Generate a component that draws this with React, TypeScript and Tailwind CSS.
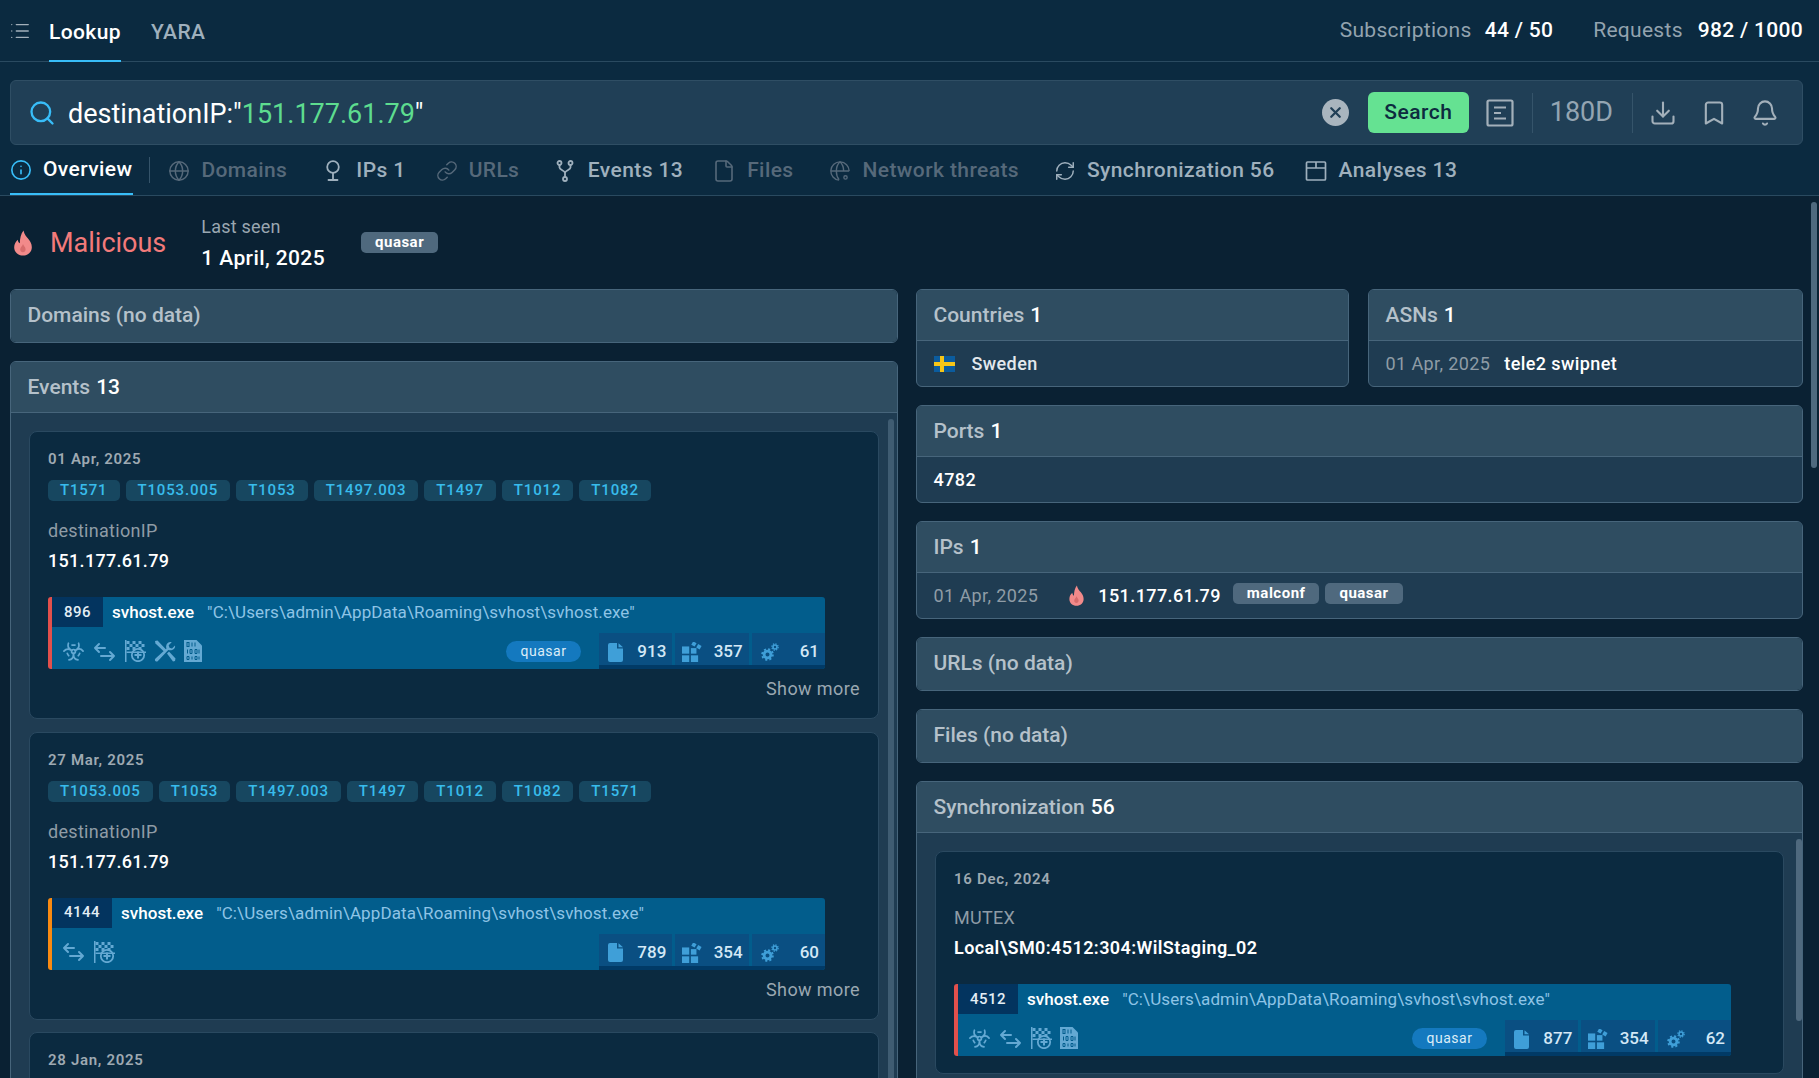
import React from 'react';
import {
  Bell, Biohazard, Bookmark, Download, Globe, Link, List,
  RefreshCw, Search, File, Info, X
} from 'lucide-react';

const Flame = ({ className }: { className?: string }) => (
  <svg viewBox="0 0 20 28" className={className} fill="#f28a8a">
    <path d="M10.5 0.5c1 4.5 3.2 6.5 5.3 9.3 2 2.6 3.7 5.4 3.7 8.7 0 5.4-4.3 9-9.5 9S0.5 23.900 0.5 18.500c0-3.600 1.800-6.300 3.900-8.100 0.200 1.900 0.900 3.200 2.200 4 0.100-5.200 1-10.300 3.900-13.900z" />
    <path d="M10 15c0.500 2 2.800 3 2.800 5.800 0 1.900-1.300 3.200-2.900 3.200s-2.900-1.300-2.900-3c0-2.800 2.300-3.500 3-6z" fill="#d76c6c" />
  </svg>
);

const FlagPlus = () => (
  <svg viewBox="0 0 22 22" className="w-[22px] h-[22px]" fill="currentColor">
    <path d="M1 0h1.500v22H1z" />
    <path d="M2.500 1h3v3h-3zM8.500 1h3v3h-3zM14.500 1h3v3h-3zM5.500 4h3v3h-3zM11.500 4h3v3h-3zM17.500 4h3v3h-3zM2.500 7h3v3h-3zM8.500 7h3v3h-3zM14.500 7h3v3h-3z" />
    <path d="M2.500 11.500h20V13h-20z" />
    <circle cx="14" cy="15" r="6.200" fill="none" stroke="currentColor" strokeWidth="1.800" />
    <path d="M13 11.500h2V14h2.500v2H15v2.500h-2V16h-2.500v-2H13z" />
  </svg>
);

const SwapArrows = () => (
  <svg viewBox="0 0 23 23" className="w-[23px] h-[23px]" fill="none" stroke="currentColor" strokeWidth="2" strokeLinecap="round" strokeLinejoin="round">
    <path d="M12 8H2M6 4L2 8l4 4" />
    <path d="M8 16h13M17 12l4 4-4 4" />
  </svg>
);

const Tools = () => (
  <svg viewBox="0 0 22 22" className="w-[22px] h-[22px]" fill="currentColor">
    <path d="M1 1l2.500-0.500 9 9.500-2 2L1.500 3.500z" />
    <path d="M21 5.500l-3 3-2.500-0.800-0.800-2.500 3-3c-2.700-0.700-5.600 1.200-5.600 4.300 0 0.800 0.100 1.300 0.400 1.900L1.500 18.400c-0.800 0.800-0.800 1.800-0.100 2.500 0.800 0.800 1.800 0.700 2.500 0L14.300 10c3.500 1.100 7.500-1.200 6.700-4.500z" />
    <path d="M13 13.500l2-2 6.500 7-0.500 2.500-2 0.500z" />
  </svg>
);

const BinaryDoc = () => (
  <svg viewBox="0 0 18 22" className="w-[18px] h-[22px]">
    <path d="M0 0h12.500L18 5.500V22H0z" fill="currentColor" />
    <g fill="none" stroke="#025d8c" strokeWidth="1">
      <rect x="3" y="2.500" width="2" height="4" />
      <path d="M8 2.500v4M11 2.500v4M3.500 9.500v4M6 9.500h2v4H6zM11 9.500h2v4h-2zM15 9.500v4M3 16.500h2v3H3zM8 16.500v3M11 16.500h2v3h-2zM15 16.500v3" />
    </g>
  </svg>
);

const Blocks = () => (
  <svg viewBox="0 0 18 18" className="w-[20px] h-[20px] -ml-[2px]" fill="currentColor">
    <rect x="0" y="4" width="6.500" height="6.500" />
    <rect x="0" y="12" width="6.500" height="6" />
    <rect x="8" y="12" width="6.500" height="6" />
    <rect x="8" y="5.500" width="5" height="5" />
    <rect x="9" y="0" width="3.500" height="3.500" transform="rotate(30 10.700 1.700)" />
    <rect x="13.500" y="2.500" width="3.500" height="3.500" transform="rotate(30 15.200 4.200)" />
  </svg>
);

const Gears = () => (
  <svg viewBox="0 0 18 18" className="w-[18px] h-[18px]" fill="none" stroke="currentColor">
    <circle cx="6.500" cy="11.500" r="3.400" strokeWidth="2.800" />
    <circle cx="6.500" cy="11.500" r="5.400" strokeWidth="1.800" strokeDasharray="2.100 2.140" />
    <circle cx="14" cy="4" r="2" strokeWidth="1.600" />
    <circle cx="14" cy="4" r="3.200" strokeWidth="1.200" strokeDasharray="1.300 1.210" />
  </svg>
);

const FileFill = () => (
  <svg viewBox="0 0 15 19" className="w-[15px] h-[19px]" fill="currentColor">
    <path d="M2 0h7v5.500h6V17a2 2 0 01-2 2H2a2 2 0 01-2-2V2a2 2 0 012-2z" />
    <path d="M10.500 0.300L15 4.300h-4.500z" />
  </svg>
);

const NetGlobe = ({ className }: { className?: string }) => (
  <svg viewBox="0 0 24 24" className={className} fill="none" stroke="currentColor" strokeWidth="1.500">
    <path d="M11 22a10 10 0 1 1 11-10" />
    <path d="M2 12h20M12 2c-3 3-4 6-4 10s1 7 3 9.500M12 2c3 3 4 6 4 10" />
    <circle cx="18" cy="19" r="1.800" />
  </svg>
);

const Pin = ({ className }: { className?: string }) => (
  <svg viewBox="0 0 24 24" className={className} fill="none" stroke="currentColor" strokeWidth="1.800" strokeLinecap="round">
    <circle cx="12" cy="8" r="5.800" />
    <path d="M12 14v7M7.500 21h9" />
  </svg>
);

const Fork = ({ className }: { className?: string }) => (
  <svg viewBox="0 0 24 24" className={className} fill="none" stroke="currentColor" strokeWidth="1.800" strokeLinecap="round">
    <circle cx="6.500" cy="4" r="2" />
    <circle cx="17.500" cy="4" r="2" />
    <circle cx="12" cy="20" r="2" />
    <path d="M6.500 6v2.500c0 2.500 5.500 3 5.500 5.500v4M17.500 6v2.500c0 2.500-5.500 3-5.500 5.500" />
  </svg>
);

const Sheet = ({ className }: { className?: string }) => (
  <svg viewBox="0 0 24 24" className={className} fill="none" stroke="currentColor" strokeWidth="1.700">
    <rect x="2.500" y="3" width="19" height="18" rx="1" />
    <path d="M2.500 9h19M12 3v6" />
  </svg>
);

const DocLines = () => (
  <svg viewBox="0 0 28 28" className="w-[28px] h-[28px]" fill="none" stroke="currentColor" strokeWidth="2.200">
    <rect x="1.500" y="1.500" width="25" height="25" rx="1.500" />
    <path d="M8 8.500h12M8 14h7M8 19.500h12" />
  </svg>
);

type Tab = { label: string; Icon: any; cls: string; icon: string };

const tabs: Tab[] = [
  { label: 'Domains', Icon: Globe, cls: 'text-[#56697a] ml-[18px]', icon: 'w-[22px] h-[22px]' },
  { label: 'IPs 1', Icon: Pin, cls: 'text-[#9fb0bd] ml-[34px]', icon: 'w-[24px] h-[24px]' },
  { label: 'URLs', Icon: Link, cls: 'text-[#56697a] ml-[30px]', icon: 'w-[22px] h-[22px]' },
  { label: 'Events 13', Icon: Fork, cls: 'text-[#9fb0bd] ml-[33.500px]', icon: 'w-[24px] h-[24px]' },
  { label: 'Files', Icon: File, cls: 'text-[#56697a] ml-[29px]', icon: 'w-[24px] h-[24px]' },
  { label: 'Network threats', Icon: NetGlobe, cls: 'text-[#56697a] ml-[36px]', icon: 'w-[22px] h-[22px]' },
  { label: 'Synchronization 56', Icon: RefreshCw, cls: 'text-[#9fb0bd] ml-[35px]', icon: 'w-[22px] h-[22px]' },
  { label: 'Analyses 13', Icon: Sheet, cls: 'text-[#9fb0bd] ml-[29px]', icon: 'w-[24px] h-[24px]' },
];

const Panel = ({ title, count, children }: { title: string; count?: string; children?: React.ReactNode }) => (
  <div className="rounded-md border border-[#47657b] bg-[#1f3c52] overflow-hidden">
    <div className={`bg-[#2f4d61] px-[16.500px] flex items-center text-[21px] font-medium text-[#b5c1ca] ${children ? 'h-[51px] pt-[2px] border-b border-[#47657b]' : 'h-[52px]'}`}>
      <span>{title}</span>
      {count && <span className="text-white ml-[6px]">{count}</span>}
    </div>
    {children}
  </div>
);

const Row = ({ children }: { children: React.ReactNode }) => (
  <div className="h-[45px] px-[16.500px] flex items-center text-[18px] tracking-[0.4px]">{children}</div>
);

const Badge = ({ text }: { text: string }) => (
  <span className="h-[21px] px-[14px] rounded-[5px] bg-[#4f697e] text-white text-[15px] font-bold tracking-[0.5px] flex items-center">{text}</span>
);

type Proc = {
  pid: string; accent: string; icons: React.ReactNode[]; tag?: boolean;
  stats: [string, string, string];
};

const iconSet = {
  bio: <Biohazard className="w-[23px] h-[23px]" strokeWidth={1.800} />,
  arrows: <SwapArrows />,
  flag: <FlagPlus />,
  tools: <Tools />,
  bin: <BinaryDoc />,
};

const ProcessBar = ({ pid, accent, icons, tag, stats }: Proc) => (
  <div className={`w-[777px] h-[72px] rounded-[3px] bg-[#025d8c] border-l-[4px] ${accent} flex flex-col overflow-hidden`}>
    <div className="h-[30px] flex items-center">
      <div className="h-full px-[12px] bg-[#03345f] text-[#e4eef5] text-[15px] font-medium tracking-[0.5px] flex items-center">{pid}</div>
      <span className="ml-[9px] pt-[2px] text-white text-[17px] font-medium">svhost.exe</span>
      <span className="ml-[13px] pt-[2px] text-[#8ec4e6] text-[17px] tracking-[0.1px]">"C:\Users\admin\AppData\Roaming\svhost\svhost.exe"</span>
    </div>
    <div className="flex-1 flex pt-[6px]">
      <div className="flex-1 flex items-center pl-[10px] gap-[8px] text-[#64a9d3]">
        {icons.map((ic, i) => <span key={i} className="flex">{ic}</span>)}
        {tag && (
          <span className="ml-auto mr-[18px] w-[75px] h-[21px] rounded-full bg-[#1479bf] text-[#dcedf8] text-[14px] tracking-[0.5px] flex items-center justify-center">quasar</span>
        )}
      </div>
      <div className="w-[226px] bg-[#013a66] h-[36px] shrink-0">
        <div className="h-[32px] flex gap-[3px] bg-[#025d8c]">
          {stats.map((n, i) => (
            <div key={i} className="flex-1 bg-[#0a4f82] flex items-center justify-between pl-[9px] pr-[6px] pt-[6px] text-[#d3e8f6] text-[17px] font-medium">
              <span className="text-[#3f9fd8] flex">{i === 0 ? <FileFill /> : i === 1 ? <Blocks /> : <Gears />}</span>
              <span>{n}</span>
            </div>
          ))}
        </div>
      </div>
    </div>
  </div>
);

const Tags = ({ tags }: { tags: string[] }) => (
  <div className="flex gap-[6px] mt-[12px] h-[21px]">
    {tags.map(t => (
      <span key={t} className="px-[12px] rounded-[5px] bg-[#174760] text-[#38bcec] text-[15px] font-medium tracking-[0.85px] flex items-center">{t}</span>
    ))}
  </div>
);

const EventCard = ({ date, tags, label, value, proc, bold, cls, showMore = true }: {
  date: string; tags?: string[]; label?: string; value?: string; proc?: Proc; bold?: boolean; cls: string; showMore?: boolean;
}) => (
  <div className={`rounded-lg border border-[#2a4960] bg-[#0b2a40] px-[18px] pt-[18px] shrink-0 ${cls}`}>
    <div className="text-[15px] font-semibold text-[#9ea9b2] tracking-[0.7px] leading-[18px]">{date}</div>
    {tags && <Tags tags={tags} />}
    {label && <div className="mt-[19px] text-[18px] tracking-[0.3px] text-[#8f9ca6] leading-[22px]">{label}</div>}
    {value && <div className={`mt-[8px] text-[18px] text-white leading-[22px] ${bold ? 'font-semibold tracking-[0.4px]' : 'font-medium tracking-[0.3px]'}`}>{value}</div>}
    {proc && <div className="mt-[25px]"><ProcessBar {...proc} /></div>}
    {showMore && <div className="mt-[9px] text-right text-[18px] tracking-[0.4px] text-[#9aa7b1] leading-[22px]">Show more</div>}
  </div>
);

export default function App() {
  return (
    <div className="relative h-[1078px] w-full overflow-hidden bg-[#0a2133] font-['Roboto',sans-serif] text-white">
      {/* top nav */}
      <div className="h-[62px] bg-[#0b2a40] border-b border-[#2a4a60] flex items-stretch pl-[9px] pr-[16px]">
        <List className="w-[22px] h-[22px] mt-[20px] text-[#a3b0ba]" strokeWidth={1.500} />
        <div className="ml-[18px] h-[62px] border-b-2 border-[#38bdf8] text-[21px] font-medium tracking-[0.4px] pt-[19px] leading-[26px]">Lookup</div>
        <div className="ml-[30px] text-[21px] font-medium text-[#9fb0bd] tracking-[0.4px] pt-[19px] leading-[26px]">YARA</div>
        <div className="ml-auto flex items-start pt-[17px] text-[21px] leading-[26px] tracking-[0.3px]">
          <span className="text-[#93a3af]">Subscriptions</span>
          <span className="ml-[13px] font-medium">44 / 50</span>
          <span className="ml-[40px] text-[#93a3af]">Requests</span>
          <span className="ml-[15px] font-medium">982 / 1000</span>
        </div>
      </div>

      {/* search + tabs */}
      <div className="bg-[#0b2a40] pt-[18px] border-b border-[#2a4a60]">
        <div className="ml-[10px] mr-[16px] h-[65px] rounded-md border border-[#2f4e64] bg-[#203f56] flex items-center pl-[17px] pr-[23px]">
          <Search className="w-[28px] h-[28px] text-[#38bdf8]" strokeWidth={2} />
          <div className="ml-[12px] mt-[4px] text-[27px] text-white">destinationIP:"<span className="text-[#5ddc8f]">151.177.61.79</span>"</div>
          <div className="ml-auto w-[27px] h-[27px] rounded-full bg-[#a9b5be] flex items-center justify-center">
            <X className="w-[17px] h-[17px] text-[#203f56]" strokeWidth={3.200} />
          </div>
          <div className="ml-[19px] w-[101px] h-[41px] rounded-md bg-[#65e292] text-[#0d2b3f] text-[21px] font-medium tracking-[0.5px] flex items-center justify-center">Search</div>
          <div className="ml-[17px] text-[#a3b0ba] flex"><DocLines /></div>
          <div className="ml-[18px] w-px h-[40px] bg-[#35546a]" />
          <div className="ml-[17px] text-[27px] text-[#94a5b2]">180D</div>
          <div className="ml-[19px] w-px h-[40px] bg-[#35546a]" />
          <Download className="ml-[16px] w-[28px] h-[28px] text-[#a3b0ba]" strokeWidth={1.800} />
          <Bookmark className="ml-[23px] w-[28px] h-[28px] text-[#a3b0ba]" strokeWidth={1.800} />
          <Bell className="ml-[23px] w-[28px] h-[28px] text-[#a3b0ba]" strokeWidth={1.800} />
        </div>
        <div className="h-[50px] flex items-center pl-[10px] text-[21px] font-medium tracking-[0.4px]">
          <div className="h-full flex items-center border-b-2 border-[#38bdf8] pr-[1px] pt-[1px]">
            <Info className="w-[22px] h-[22px] text-[#38bdf8]" strokeWidth={1.800} />
            <span className="ml-[11px]">Overview</span>
          </div>
          <div className="ml-[16px] w-px h-[26px] bg-[#35546a]" />
          {tabs.map(({ label, Icon, cls, icon }) => (
            <div key={label} className={`flex items-center pt-[1px] ${cls}`}>
              <Icon className={icon} strokeWidth={1.600} />
              <span className="ml-[11px]">{label}</span>
            </div>
          ))}
        </div>
      </div>

      {/* summary */}
      <div className="h-[93px] flex items-center pl-[13px]">
        <Flame className="w-[20px] h-[26px]" />
        <span className="ml-[17px] mt-[1px] text-[27px] text-[#f27a7a]">Malicious</span>
        <div className="ml-[35px] flex flex-col gap-[7px]">
          <span className="text-[18px] leading-[24px] tracking-[0.2px] text-[#9aa7b1] -mt-[1px]">Last seen</span>
          <span className="text-[21px] leading-[24px] font-medium tracking-[0.4px] -mb-[1px]">1 April, 2025</span>
        </div>
        <div className="ml-[36px]"><Badge text="quasar" /></div>
      </div>

      {/* columns */}
      <div className="grid grid-cols-[888px_887px] gap-x-[18px] pl-[10px] items-start">
        <div className="flex flex-col gap-[18px]">
          <Panel title="Domains (no data)" />
          <div className="relative">
            <Panel title="Events" count="13">
              <div className="px-[18px] pt-[18px] flex flex-col gap-[12.500px] h-[700px]">
                <EventCard
                  cls="h-[288px]"
                  date="01 Apr, 2025"
                  tags={['T1571', 'T1053.005', 'T1053', 'T1497.003', 'T1497', 'T1012', 'T1082']}
                  label="destinationIP"
                  value="151.177.61.79"
                  proc={{
                    pid: '896', accent: 'border-[#e2504c]', tag: true,
                    icons: [iconSet.bio, iconSet.arrows, iconSet.flag, iconSet.tools, iconSet.bin],
                    stats: ['913', '357', '61'],
                  }}
                />
                <EventCard
                  cls="h-[288px]"
                  date="27 Mar, 2025"
                  tags={['T1053.005', 'T1053', 'T1497.003', 'T1497', 'T1012', 'T1082', 'T1571']}
                  label="destinationIP"
                  value="151.177.61.79"
                  proc={{
                    pid: '4144', accent: 'border-[#f98a12]',
                    icons: [iconSet.arrows, iconSet.flag],
                    stats: ['789', '354', '60'],
                  }}
                />
                <EventCard cls="h-[200px]" date="28 Jan, 2025" showMore={false} />
              </div>
            </Panel>
            <div className="absolute left-[878px] top-[58px] w-[6px] h-[700px] rounded-full bg-[#3f5c72]" />
          </div>
        </div>

        <div className="flex flex-col gap-[18px]">
          <div className="grid grid-cols-[433px_435px] gap-x-[19px]">
            <Panel title="Countries" count="1">
              <Row>
                <svg viewBox="0 0 21 16" className="w-[21px] h-[16px]">
                  <rect width="21" height="16" fill="#0b5c9e" />
                  <path d="M6 0h4v16H6zM0 6h21v4H0z" fill="#f5c518" />
                </svg>
                <span className="ml-[17px] font-medium text-[#e3e8ec]">Sweden</span>
              </Row>
            </Panel>
            <Panel title="ASNs" count="1">
              <Row>
                <span className="text-[#8f9ca6]">01 Apr, 2025</span>
                <span className="ml-[14px] font-medium">tele2 swipnet</span>
              </Row>
            </Panel>
          </div>
          <Panel title="Ports" count="1">
            <Row><span className="font-medium">4782</span></Row>
          </Panel>
          <Panel title="IPs" count="1">
            <Row>
              <span className="text-[#8f9ca6]">01 Apr, 2025</span>
              <Flame className="ml-[30px] w-[17px] h-[21px]" />
              <span className="ml-[13px] font-medium">151.177.61.79</span>
              <div className="ml-[12px] flex gap-[6px] -mt-[4px]"><Badge text="malconf" /><Badge text="quasar" /></div>
            </Row>
          </Panel>
          <Panel title="URLs (no data)" />
          <Panel title="Files (no data)" />
          <div className="relative">
            <Panel title="Synchronization" count="56">
              <div className="px-[18px] pt-[18px] pb-[100px]">
                <EventCard
                  cls="h-[223px]"
                  date="16 Dec, 2024"
                  label="MUTEX"
                  value="Local\SM0:4512:304:WilStaging_02"
                  bold
                  showMore={false}
                  proc={{
                    pid: '4512', accent: 'border-[#e2504c]', tag: true,
                    icons: [iconSet.bio, iconSet.arrows, iconSet.flag, iconSet.bin],
                    stats: ['877', '354', '62'],
                  }}
                />
              </div>
            </Panel>
            <div className="absolute right-[1px] top-[58px] w-[6px] h-[182px] rounded-full bg-[#4f697e]" />
          </div>
        </div>
      </div>

      {/* page scrollbar */}
      <div className="absolute left-[1811px] top-[202px] w-[6px] h-[266px] rounded-full bg-[#4f697e]" />
    </div>
  );
}
